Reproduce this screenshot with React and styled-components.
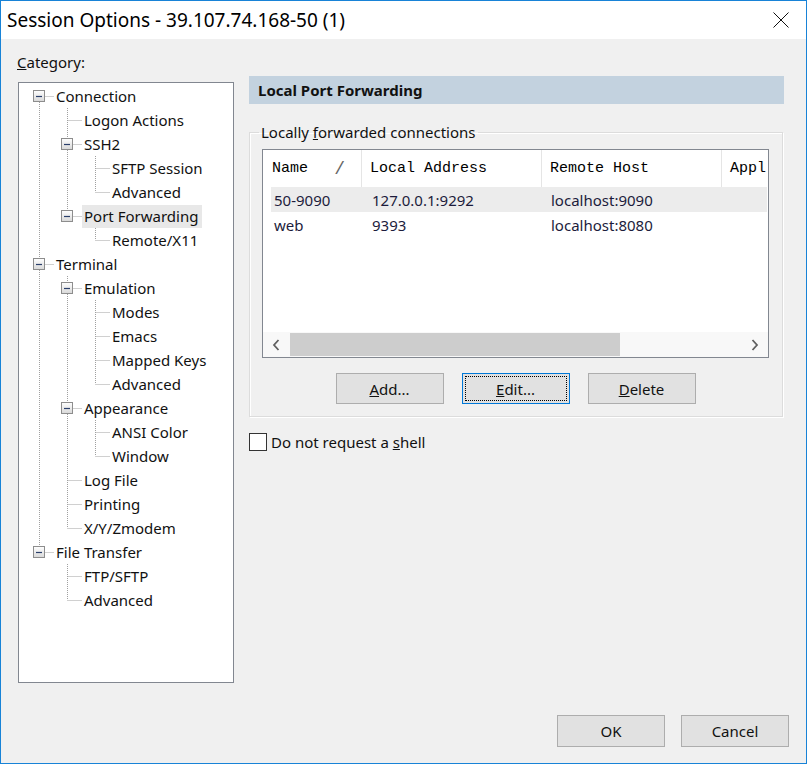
import React from "react"
import styled, { createGlobalStyle } from "styled-components"

const GlobalStyle = createGlobalStyle`
  html, body {
    margin: 0;
    padding: 0;
    background: #f0f0f0;
  }
  * {
    box-sizing: border-box;
  }
`

const UI_FONT = `"Noto Sans", "Open Sans", Arial, sans-serif`
const MONO_FONT = `"Liberation Mono", "Courier New", monospace`

const Window = styled.div`
  width: 807px;
  height: 764px;
  border: 1px solid #1883d7;
  background: #f0f0f0;
  display: flex;
  flex-direction: column;
  font-family: ${UI_FONT};
  font-size: 15px;
  color: #111;
`

const TitleBar = styled.div`
  height: 38px;
  flex-shrink: 0;
  background: #fff;
  display: flex;
  align-items: center;
  justify-content: space-between;
  padding: 0 17px 0 6px;
`

const Title = styled.div`
  font-size: 19px;
  color: #000;
`

const Body = styled.div`
  flex: 1;
  display: flex;
  flex-direction: column;
  padding: 12px 17px 16px 16px;
`

const Main = styled.div`
  display: grid;
  grid-template-columns: 217px 535px;
  column-gap: 15px;
  align-items: start;
`

const LeftColumn = styled.div`
  display: flex;
  flex-direction: column;
`

const CategoryLabel = styled.div`
  line-height: 22px;
  margin-bottom: 9px;
`

const TreeBox = styled.div`
  margin-left: 1px;
  height: 601px;
  border: 1px solid #828790;
  background: #fff;
  padding-top: 1px;
`

const TreeRow = styled.div`
  display: flex;
  align-items: center;
  height: 24px;
`

const TreeLabel = styled.span`
  padding: 0 4px 0 2px;
  line-height: 23px;
  background: ${props => (props.$selected ? "#e8e8e8" : "transparent")};
  white-space: nowrap;
`

const RightColumn = styled.div`
  display: flex;
  flex-direction: column;
  padding-top: 25px;
`

const SectionHeader = styled.div`
  height: 28px;
  background: #c3d2df;
  font-weight: 700;
  display: flex;
  align-items: center;
  padding-left: 9px;
  color: #111;
`

const Group = styled.fieldset`
  margin: 18px 1px 0 0;
  padding: 7px 13px 12px 12px;
  border: 1px solid #dcdcdc;
  box-shadow: inset 1px 1px 0 #fff, 1px 1px 0 #fff;
  min-width: 0;
`

const Legend = styled.legend`
  padding: 0 2px;
  margin-left: -3px;
  line-height: 20px;
`

const ListView = styled.div`
  height: 209px;
  border: 1px solid #828790;
  background: #fff;
  display: flex;
  flex-direction: column;
`

const HeaderRow = styled.div`
  display: grid;
  grid-template-columns: 99px 180px 180px 1fr;
  height: 37px;
  flex-shrink: 0;
`

const HeaderCell = styled.div`
  display: flex;
  align-items: center;
  justify-content: space-between;
  padding-left: ${props => props.$pad || 8}px;
  padding-right: 16px;
  border-right: ${props => (props.$last ? "none" : "1px solid #e5e5e5")};
  font-family: ${MONO_FONT};
  font-size: 15px;
  color: #000;
  white-space: nowrap;
  overflow: hidden;
`

const SortMark = styled.span`
  color: #666;
  font-size: 18px;
`

const DataRow = styled.div`
  display: grid;
  grid-template-columns: 91px 180px 180px 1fr;
  height: 25px;
  margin: 0 1px 0 8px;
  align-items: center;
  background: ${props => (props.$highlight ? "#ececec" : "transparent")};
  color: #1c1c3c;
`

const DataCell = styled.div`
  padding-left: ${props => props.$pad}px;
  white-space: nowrap;
`

const Spacer = styled.div`
  flex: 1;
`

const ScrollBar = styled.div`
  height: 25px;
  flex-shrink: 0;
  display: flex;
  align-items: stretch;
  background: #f8f8f8;
  padding: 1px 0;
`

const ScrollArrow = styled.div`
  width: 26px;
  display: flex;
  align-items: center;
  justify-content: center;
`

const ScrollTrack = styled.div`
  flex: 1;
  display: flex;
`

const ScrollThumb = styled.div`
  width: 330px;
  margin-left: 1px;
  background: #cdcdcd;
`

const ButtonRow = styled.div`
  display: flex;
  justify-content: center;
  gap: 18px;
  margin-top: 15px;
`

const Button = styled.div`
  width: 108px;
  height: ${props => (props.$tall ? 32 : 31)}px;
  background: #e1e1e1;
  border: 1px solid ${props => (props.$focused ? "#0078d7" : "#adadad")};
  outline: ${props => (props.$focused ? "1px dotted #000" : "none")};
  outline-offset: -4px;
  display: flex;
  align-items: center;
  justify-content: center;
  color: #111;
`

const CheckRow = styled.div`
  display: flex;
  align-items: center;
  gap: 4px;
  margin-top: 15px;
`

const CheckBox = styled.span`
  width: 18px;
  height: 18px;
  border: 1px solid #333;
  background: #fff;
`

const Footer = styled.div`
  margin-top: auto;
  display: flex;
  justify-content: flex-end;
  gap: 16px;
`

const tree = [
  {
    label: "Connection",
    children: [
      { label: "Logon Actions" },
      { label: "SSH2", children: [{ label: "SFTP Session" }, { label: "Advanced" }] },
      { label: "Port Forwarding", selected: true, children: [{ label: "Remote/X11" }] },
    ],
  },
  {
    label: "Terminal",
    children: [
      {
        label: "Emulation",
        children: [
          { label: "Modes" },
          { label: "Emacs" },
          { label: "Mapped Keys" },
          { label: "Advanced" },
        ],
      },
      { label: "Appearance", children: [{ label: "ANSI Color" }, { label: "Window" }] },
      { label: "Log File" },
      { label: "Printing" },
      { label: "X/Y/Zmodem" },
    ],
  },
  {
    label: "File Transfer",
    children: [{ label: "FTP/SFTP" }, { label: "Advanced" }],
  },
]

function flatten(nodes, trail = [], out = []) {
  nodes.forEach((n, i) => {
    const last = i === nodes.length - 1
    out.push({
      label: n.label,
      selected: n.selected,
      hasChildren: !!n.children,
      level: trail.length,
      trail,
      last,
      top: i === 0 && trail.length === 0,
    })
    if (n.children) flatten(n.children, [...trail, !last], out)
  })
  return out
}

const rows = flatten(tree)

// dotted tree connectors + the expand box for one row
function Connector({ row }) {
  const w = 35 + 28 * row.level
  const cx = 20 + 28 * row.level + 0.5
  const dots = { stroke: "#a0a0a0", strokeWidth: 1, strokeDasharray: "1 1" }
  return (
    <svg width={w} height={24} style={{ flexShrink: 0, display: "block" }}>
      {row.trail.map((cont, d) =>
        cont ? <line key={d} x1={20 + 28 * d + 0.5} y1={0} x2={20 + 28 * d + 0.5} y2={24} {...dots} /> : null
      )}
      {!row.top && <line x1={cx} y1={0} x2={cx} y2={12} {...dots} />}
      {!row.last && <line x1={cx} y1={12} x2={cx} y2={24} {...dots} />}
      <line x1={cx} y1={12.5} x2={w} y2={12.5} {...dots} />
      {row.hasChildren && (
        <g>
          <defs>
            <linearGradient id="boxfill" x1="0" y1="0" x2="0" y2="1">
              <stop offset="0" stopColor="#ffffff" />
              <stop offset="1" stopColor="#d8d8d8" />
            </linearGradient>
          </defs>
          <rect x={cx - 6} y={6.5} width={11} height={11} fill="url(#boxfill)" stroke="#8d8d8d" />
          <line x1={cx - 3.5} y1={12.5} x2={cx + 2.5} y2={12.5} stroke="#2a3f6b" strokeWidth={1.2} />
        </g>
      )}
    </svg>
  )
}

function Chevron({ dir }) {
  const d = dir === "left" ? "M6.5 1 L2 6 L6.5 11" : "M1.5 1 L6 6 L1.5 11"
  return (
    <svg width={8} height={12}>
      <path d={d} fill="none" stroke="#606060" strokeWidth={1.8} />
    </svg>
  )
}

function CloseIcon() {
  return (
    <svg width={16} height={16}>
      <path d="M0.5 0.5 L15.5 15.5 M15.5 0.5 L0.5 15.5" stroke="#111" strokeWidth={1} />
    </svg>
  )
}

const connections = [
  { name: "50-9090", local: "127.0.0.1:9292", remote: "localhost:9090" },
  { name: "web", local: "9393", remote: "localhost:8080" },
]

export default function App() {
  return (
    <>
      <GlobalStyle />
      <Window>
        <TitleBar>
          <Title>Session Options - 39.107.74.168-50 (1)</Title>
          <CloseIcon />
        </TitleBar>
        <Body>
          <Main>
            <LeftColumn>
              <CategoryLabel>
                <u>C</u>ategory:
              </CategoryLabel>
              <TreeBox>
                {rows.map((row, i) => (
                  <TreeRow key={i}>
                    <Connector row={row} />
                    <TreeLabel $selected={row.selected}>{row.label}</TreeLabel>
                  </TreeRow>
                ))}
              </TreeBox>
            </LeftColumn>
            <RightColumn>
              <SectionHeader>Local Port Forwarding</SectionHeader>
              <Group>
                <Legend>
                  Locally <u>f</u>orwarded connections
                </Legend>
                <ListView>
                  <HeaderRow>
                    <HeaderCell $pad={9}>
                      Name <SortMark>/</SortMark>
                    </HeaderCell>
                    <HeaderCell>Local Address</HeaderCell>
                    <HeaderCell>Remote Host</HeaderCell>
                    <HeaderCell $last>Appl</HeaderCell>
                  </HeaderRow>
                  {connections.map((c, i) => (
                    <DataRow key={c.name} $highlight={i === 0}>
                      <DataCell $pad={3}>{c.name}</DataCell>
                      <DataCell $pad={10}>{c.local}</DataCell>
                      <DataCell $pad={9}>{c.remote}</DataCell>
                      <DataCell $pad={9} />
                    </DataRow>
                  ))}
                  <Spacer />
                  <ScrollBar>
                    <ScrollArrow>
                      <Chevron dir="left" />
                    </ScrollArrow>
                    <ScrollTrack>
                      <ScrollThumb />
                    </ScrollTrack>
                    <ScrollArrow>
                      <Chevron dir="right" />
                    </ScrollArrow>
                  </ScrollBar>
                </ListView>
                <ButtonRow>
                  <Button>
                    <span><u>A</u>dd...</span>
                  </Button>
                  <Button $focused>
                    <span><u>E</u>dit...</span>
                  </Button>
                  <Button>
                    <span><u>D</u>elete</span>
                  </Button>
                </ButtonRow>
              </Group>
              <CheckRow>
                <CheckBox />
                <span>
                  Do not request a <u>s</u>hell
                </span>
              </CheckRow>
            </RightColumn>
          </Main>
          <Footer>
            <Button $tall>OK</Button>
            <Button $tall>Cancel</Button>
          </Footer>
        </Body>
      </Window>
    </>
  )
}
